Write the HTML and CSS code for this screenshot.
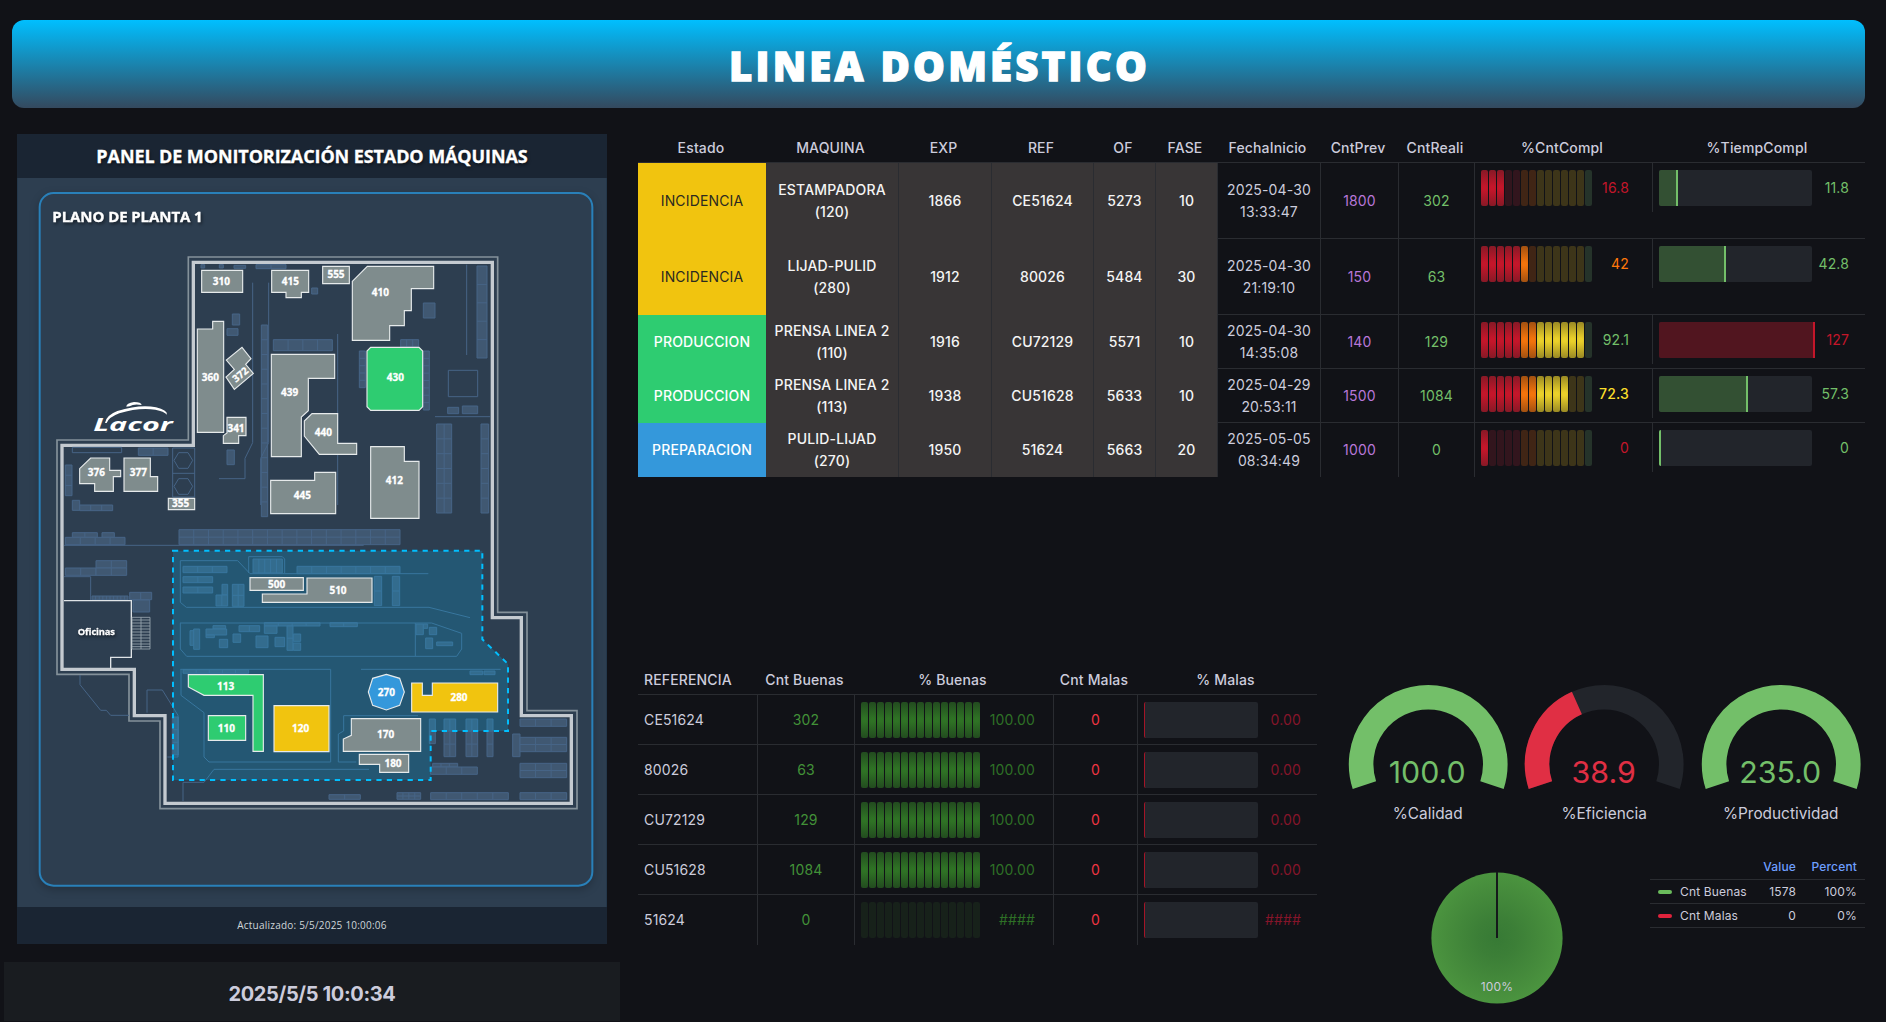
FILE: index.html
```html
<!DOCTYPE html>
<html lang="es">
<head>
<meta charset="utf-8">
<title>Linea Doméstico</title>
<link rel="stylesheet" href="styles.css">
</head>
<body>
<header class="banner"><h1>LINEA DOMÉSTICO</h1></header>
<main class="dashboard">
  <div class="left">
    <section class="plant">
      <h2 class="plant-title"><span>PANEL DE MONITORIZACIÓN ESTADO MÁQUINAS</span></h2>
      <svg class="plan" viewBox="-36 -186 1764 2187">
        <rect class="frame" x="29" y="-141" width="1658" height="2078" rx="42"/>
        <text class="plan-title" x="67" y="-54" textLength="451">PLANO DE PLANTA 1</text>
        <path class="wall-outer" d="M475 51H1403V1117H1491V1412H1641V1706H390V1443H297V1303H81V600H475Z"/>
        <path class="wall" d="M490 67H1387V1133H1474V1427H1624V1690H405V1427H313V1288H96V616H490Z"/>
        <g id="racks"></g>
        <g class="lines">
          <path d="M127 622H275V638H127ZM428 624H494V771H428ZM428 700H494M432 661L446 638H474L488 661L474 685H446ZM432 739L446 716H474L488 739L474 763H446Z"/>
          <path d="M668 128V608L645 655V716H567M716 128V608L692 655V795M923 282V795M1310 74V345M1215 530H1380M1255 391H1343V470H1255Z"/>
          <g transform="translate(0 840)">
            <path d="M102 76H1001M102 170H182V240M150 465V494L212 571H229L242 586H297M351 578V510H397L444 586V711H412"/>
            <path d="M1195 161H660L623 122H451V247L469 262H1197L1320 293M656 159V110H757L764 117V159"/>
            <path d="M451 308V387L470 409H1280L1295 387V340L1205 309H451M1156 309V408"/>
            <path d="M451 448H902V726H537L522 711V578L453 526V448M993 448H1412M1164 587H941V633L925 642V726H979M459 843V787H522L552 748H1017"/>
          </g>
        </g>
        <path class="zone" d="M429 932H1357V1198L1434 1272V1473H1202V1620H429Z"/>
        <g class="office" transform="translate(0 840)">
          <path d="M102 242H304V412H242V445"/>
          <path class="stairs" d="M306 292H360V387H306ZM333 292V387M306 300H360M306 309H360M306 318H360M306 327H360M306 336H360M306 345H360M306 354H360M306 363H360M306 372H360M306 380H360"/>
        </g>
        <g class="machines">
          <path d="M515 91H638V157H515Z"/>
          <path d="M725 91H836V157H814V173H768V157H725Z"/>
          <path d="M502 267H548V244H581V577H502Z"/>
          <path d="M636 322L663 356L647 373L670 400L613 448L588 411L613 388L589 360Z"/>
          <path d="M591 532H648V587H626V610H580V587L591 579Z"/>
          <path d="M149 686L182 654H239V691H272V710H250V754H194V731H149Z"/>
          <path d="M282 654H361V710H383V754H282Z"/>
          <path d="M415 775H494V809H415Z"/>
          <path d="M724 343H914V415H835V512L814 531V650H724Z"/>
          <path d="M722 721H854V697H917V821H722Z"/>
          <path d="M823 543L846 521H923V610H980V643H868L823 588Z"/>
          <path d="M878 79H958V131H878Z"/>
          <path d="M967 124L1012 79H1211V146H1144V212H1123V257H1079V301H967Z"/>
          <path class="run" d="M1022 322H1167L1178 333V500L1167 511H1022L1011 500V333Z"/>
          <path d="M1022 620H1123V664H1167V835H1022Z"/>
          <path d="M660 1013H820V1051H660Z"/>
          <path d="M697 1062H831V1014H1026V1087H697Z"/>
          <path class="run" d="M475 1304H700V1534H669V1366H522L475 1341Z"/>
          <path class="run" d="M535 1427H647V1501H535Z"/>
          <path class="incident" d="M732 1397H897V1535H732Z"/>
          <path class="prep" d="M1069 1303L1109 1315L1123 1356L1109 1396L1069 1410L1028 1396L1015 1356L1028 1315Z"/>
          <path class="incident" d="M1145 1329H1177V1366H1207V1329H1403V1416H1145Z"/>
          <path d="M964 1436H1172V1534H940V1497L964 1486Z"/>
          <path d="M988 1543H1136V1597H1049V1573H988Z"/>
        </g>
        <g class="labels">
          <text x="574" y="135">310</text><text x="781" y="135">415</text><text x="541" y="423">360</text>
          <text transform="translate(638 412) rotate(-40)">372</text>
          <text x="618" y="576">341</text><text x="199" y="708">376</text><text x="325" y="708">377</text>
          <text x="452" y="801">355</text><text x="779" y="468">439</text><text x="817" y="777">445</text>
          <text x="880" y="588">440</text><text x="918" y="114">555</text><text x="1051" y="168">410</text>
          <text x="1096" y="423">430</text><text x="1093" y="732">412</text><text x="740" y="1044">500</text>
          <text x="924" y="1062">510</text><text x="587" y="1350">113</text><text x="589" y="1476">110</text>
          <text x="812" y="1476">120</text><text x="1069" y="1368">270</text><text x="1287" y="1383">280</text>
          <text x="1067" y="1494">170</text><text x="1089" y="1581">180</text>
          <text class="office-name" x="199" y="1185" textLength="111">Oficinas</text>
        </g>
        <g class="logo">
          <text x="190" y="574" textLength="238" lengthAdjust="spacingAndGlyphs">Lacor</text>
          <path d="M225 549Q228 526 262 513Q330 492 378 502Q412 510 411 524Q402 514 376 509Q325 502 268 520Q236 532 230 549Z"/>
          <path d="M289 500Q289 489 312 486Q334 486 335 495Q312 490 299 499Z"/>
        </g>
      </svg>
      <footer class="plant-foot">Actualizado: 5/5/2025 10:00:06</footer>
    </section>
    <div class="clock"><span>2025/5/5 10:0:34</span></div>
  </div>

  <div class="right">
    <div class="grid orders">
      <div class="head"><div>Estado</div><div>MAQUINA</div><div>EXP</div><div>REF</div><div>OF</div><div>FASE</div><div>FechaInicio</div><div>CntPrev</div><div>CntReali</div><div>%CntCompl</div><div>%TiempCompl</div></div>
      <div class="row tall"><div class="st yellow">INCIDENCIA</div><div class="g">ESTAMPADORA<br>(120)</div><div class="g">1866</div><div class="g">CE51624</div><div class="g">5273</div><div class="g">10</div><div>2025-04-30<br>13:33:47</div><div class="purple">1800</div><div class="green">302</div><div class="bar"><i class="lcd" data-lit="3"></i><b class="red">16.8</b></div><div class="bar"><i class="gauge"><i class="fill" style="width:19px"></i></i><b class="green">11.8</b></div></div>
      <div class="row tall"><div class="st yellow">INCIDENCIA</div><div class="g">LIJAD-PULID<br>(280)</div><div class="g">1912</div><div class="g">80026</div><div class="g">5484</div><div class="g">30</div><div>2025-04-30<br>21:19:10</div><div class="purple">150</div><div class="green">63</div><div class="bar"><i class="lcd" data-lit="6"></i><b class="orange">42</b></div><div class="bar"><i class="gauge"><i class="fill" style="width:67px"></i></i><b class="green">42.8</b></div></div>
      <div class="row"><div class="st prod">PRODUCCION</div><div class="g">PRENSA LINEA 2<br>(110)</div><div class="g">1916</div><div class="g">CU72129</div><div class="g">5571</div><div class="g">10</div><div>2025-04-30<br>14:35:08</div><div class="purple">140</div><div class="green">129</div><div class="bar"><i class="lcd" data-lit="13"></i><b class="green">92.1</b></div><div class="bar"><i class="gauge"><i class="fill over" style="width:156px"></i></i><b class="red">127</b></div></div>
      <div class="row"><div class="st prod">PRODUCCION</div><div class="g">PRENSA LINEA 2<br>(113)</div><div class="g">1938</div><div class="g">CU51628</div><div class="g">5633</div><div class="g">10</div><div>2025-04-29<br>20:53:11</div><div class="purple">1500</div><div class="green">1084</div><div class="bar"><i class="lcd" data-lit="11"></i><b class="gold">72.3</b></div><div class="bar"><i class="gauge"><i class="fill" style="width:89px"></i></i><b class="green">57.3</b></div></div>
      <div class="row last"><div class="st blue">PREPARACION</div><div class="g">PULID-LIJAD<br>(270)</div><div class="g">1950</div><div class="g">51624</div><div class="g">5663</div><div class="g">20</div><div>2025-05-05<br>08:34:49</div><div class="purple">1000</div><div class="green">0</div><div class="bar"><i class="lcd" data-lit="1"></i><b class="red">0</b></div><div class="bar"><i class="gauge"><i class="fill" style="width:2px"></i></i><b class="green">0</b></div></div>
    </div>

    <div class="bottom">
      <div class="grid refs">
        <div class="head"><div>REFERENCIA</div><div>Cnt Buenas</div><div>% Buenas</div><div>Cnt Malas</div><div>% Malas</div></div>
        <div class="row"><div>CE51624</div><div class="dgreen">302</div><div class="bar"><i class="lcd good" data-lit="15"></i><b class="ok">100.00</b></div><div class="bad">0</div><div class="bar"><i class="gauge none"></i><b class="wine">0.00</b></div></div>
        <div class="row"><div>80026</div><div class="dgreen">63</div><div class="bar"><i class="lcd good" data-lit="15"></i><b class="ok">100.00</b></div><div class="bad">0</div><div class="bar"><i class="gauge none"></i><b class="wine">0.00</b></div></div>
        <div class="row"><div>CU72129</div><div class="dgreen">129</div><div class="bar"><i class="lcd good" data-lit="15"></i><b class="ok">100.00</b></div><div class="bad">0</div><div class="bar"><i class="gauge none"></i><b class="wine">0.00</b></div></div>
        <div class="row"><div>CU51628</div><div class="dgreen">1084</div><div class="bar"><i class="lcd good" data-lit="15"></i><b class="ok">100.00</b></div><div class="bad">0</div><div class="bar"><i class="gauge none"></i><b class="wine">0.00</b></div></div>
        <div class="row last"><div>51624</div><div class="dgreen">0</div><div class="bar"><i class="lcd good" data-lit="0"></i><b class="ok">####</b></div><div class="bad">0</div><div class="bar"><i class="gauge none"></i><b class="wine">####</b></div></div>
      </div>

      <div class="kpis">
        <div class="dials">
          <svg class="dial" viewBox="-88.2 -88.4 176.4 150"><path class="arc ok-arc" d="M-63.8 20.7A67.1 67.1 0 1 1 63.8 20.7"/><text class="val ok-val" x="-1" y="18.6">100.0</text><text class="cap" x="-.5" y="54.6">%Calidad</text></svg>
          <svg class="dial" viewBox="-88.2 -88.4 176.4 150"><path class="arc rest" d="M-63.8 20.7A67.1 67.1 0 1 1 63.8 20.7"/><path class="arc low" d="M-63.8 20.7A67.1 67.1 0 0 1 -27.3 -61.3"/><text class="val low-val" x="-.5" y="18.6">38.9</text><text class="cap" y="54.6">%Eficiencia</text></svg>
          <svg class="dial" viewBox="-88.2 -88.4 176.4 150"><path class="arc ok-arc" d="M-63.8 20.7A67.1 67.1 0 1 1 63.8 20.7"/><text class="val ok-val" x="-1" y="18.6">235.0</text><text class="cap" x="-.5" y="54.6">%Productividad</text></svg>
        </div>
        <div class="share">
          <svg class="pie" viewBox="-66 -66 132 132">
            <defs><radialGradient id="pieFill"><stop offset="0" stop-color="#377a35"/><stop offset=".3" stop-color="#3c7f37"/><stop offset=".75" stop-color="#468c3c"/><stop offset="1" stop-color="#4b943f"/></radialGradient></defs>
            <circle r="65.6" fill="url(#pieFill)"/><path d="M0 0V-66" stroke="#15191b" stroke-width="2"/><text y="53">100%</text>
          </svg>
          <div class="legend">
            <div class="lrow lhead"><span></span><span>Value</span><span>Percent</span></div>
            <div class="lrow"><span><i class="key"></i>Cnt Buenas</span><span>1578</span><span>100%</span></div>
            <div class="lrow"><span><i class="key bad-key"></i>Cnt Malas</span><span>0</span><span>0%</span></div>
          </div>
        </div>
      </div>
    </div>
  </div>
</main>
<script src="app.js"></script>
</body>
</html>
```
FILE: styles.css
```css
* { box-sizing: border-box; }
body { margin: 0; height: 1022px; overflow: hidden; background: #111217; color: #ccccdc; font: 14px/22px Inter, "Liberation Sans", sans-serif; letter-spacing: .15px; }
i { font-style: normal; }
.banner { margin: 20px 21px 0 12px; height: 88px; border-radius: 12px; background: linear-gradient(#00bfff, #34495e); display: flex; justify-content: center; align-items: center; }
.banner h1 { margin: 0; padding: 4px 0 0 2px; color: #fff; font: 800 40px/48px "Open Sans", "Noto Sans", sans-serif; letter-spacing: 3.25px; -webkit-text-stroke: 1.3px #fff; }
.dashboard { display: flex; }
.left { width: 620px; flex: none; }
.plant { margin: 26px 0 0 17px; width: 590px; height: 810px; background: #2d3e50; border: 1px solid #24374a; display: flex; flex-direction: column; }
.plant-title { margin: -1px -1px 0; height: 44px; background: #1a2533; color: #fff; font: 700 18px/44px "Open Sans", sans-serif; letter-spacing: -.1px; -webkit-text-stroke: .3px #fff; text-align: center; text-shadow: 1px 2px 3px rgba(0,0,0,.5); }
.plan { display: block; width: 588px; height: 729px; font-family: "Open Sans", sans-serif; }
.plant-foot { margin: 0 -1px -1px; height: 37px; background: #1a2533; color: #cfd6da; font: 10px/37px "Open Sans", sans-serif; letter-spacing: .22px; text-align: center; }
.frame { fill: #2d3e50; stroke: #2980b9; stroke-width: 6; filter: drop-shadow(0 9px 12px rgba(0,0,0,.22)); }
.plan-title { fill: #fff; stroke: #fff; stroke-width: 1; font-size: 45px; font-weight: 700; letter-spacing: 0; filter: drop-shadow(4px 6px 5px rgba(0,0,0,.45)); }
.wall-outer { fill: none; stroke: #84919a; stroke-width: 5; }
.wall { fill: none; stroke: #c4cad0; stroke-width: 10; }
.rack { fill: #405872; stroke: #466486; stroke-width: 3; }
.lines { fill: none; stroke: #466486; stroke-width: 3; }
.zone { fill: rgba(0,191,255,.2); stroke: #00bfff; stroke-width: 6; stroke-dasharray: 15.6 15.6; }
.office { fill: none; stroke: #dfe3e6; stroke-width: 4; }
.stairs { stroke: #9aa7b1; stroke-width: 2.5; }
.machines { fill: #7f8c8d; stroke: #e6eaeb; stroke-width: 3.4; }
.machines .run { fill: #2ecc71; }
.machines .incident { fill: #f1c40f; }
.machines .prep { fill: #3498db; }
.labels { fill: #fff; stroke: #fff; stroke-width: .8; font-size: 30px; font-weight: 700; text-anchor: middle; letter-spacing: 0; }
.office-name { font-size: 28px; filter: drop-shadow(3px 5px 4px rgba(0,0,0,.5)); }
.logo { fill: #fff; font: italic 700 54px "Open Sans", sans-serif; letter-spacing: 0; }
.clock { margin: 18px 0 0 4px; width: 616px; height: 59px; background: #191c20; font: 700 20px/64px Inter, sans-serif; letter-spacing: -.35px; text-align: center; }
.right { margin-left: 18px; padding-top: 26px; width: 1248px; flex: none; }
.head, .row { display: grid; }
.orders { width: 1227px; }
.orders > div { grid-template-columns: 128px 133px 93px 102px 62px 62px 103px 78px 76px 178px 212px; }
.refs { width: 679px; flex: none; }
.refs > div { grid-template-columns: 120px 97px 199px 84px 179px; }
.head { height: 29px; border-bottom: 1px solid #2a2c31; font-weight: 500; text-align: center; line-height: 28px; }
.head div { padding-right: 4px; }
.head div:first-child { padding-right: 2px; }
.row { height: 54px; text-align: center; background: linear-gradient(#2a2c31, #2a2c31) bottom / 100% 1px no-repeat; }
.row.last { background: none; }
.tall { height: 76px; }
.row > div { border-right: 1px solid #2a2c31; display: flex; align-items: center; justify-content: center; }
.row > div:last-child { border-right: 0; }
.row > .st { border: 0; color: #fff; font-weight: 500; }
.row > .yellow { background: #f1c40f; color: #2b2a20; font-weight: 400; }
.prod { background: #2ecc71; }
.blue { background: #3498db; }
.row > .g { background: #383536; color: #f4f4f4; font-weight: 500; }
.purple { color: #b877d9; }
.green { color: #73bf69; }
.row > .bar { height: 49px; padding: 0 23px 0 6px; justify-content: space-between; align-self: start; }
.orders .row > .bar:last-child { padding: 0 16px 0 6px; }
.bar b { font-weight: 400; line-height: 36px; }
.red { color: #c4162a; }
.orange { color: #ff780a; }
.bar .gold { color: #fade2a; font-weight: 500; }
.lcd { display: flex; gap: 1px; height: 36px; }
.cell { width: 7px; border-radius: 2px; }
.c-red { background: #32151d; }
.c-orange { background: #402515; }
.c-yellow { background: #3d3519; }
.c-green { background: #25332a; }
.c-good { background: #17211a; }
.on.c-red { background: radial-gradient(circle, #c4162a 10%, #861926); }
.on.c-orange { background: radial-gradient(circle, #f2730c 10%, #a05011); }
.on.c-yellow { background: radial-gradient(circle, #ead02a 10%, #988824); }
.on.c-good { background: radial-gradient(circle, #2f7225 10%, #224a1f); }
.gauge { width: 153px; height: 36px; border-radius: 2px; background: #22252b; flex: none; display: block; }
.fill { display: block; height: 36px; background: #335033; border-right: 2px solid #73bf69; border-radius: 2px 0 0 2px; }
.fill.over { background: #51151f; border-color: #c4162a; }
.bottom { display: flex; margin-top: 189px; }
.refs .row { height: 50px; }
.refs .row > div:first-child, .refs .head > div:first-child { justify-content: flex-start; text-align: left; padding-left: 6px; }
.refs .row > .bar { height: 50px; padding-right: 18px; }
.refs .row > .bar:last-child { padding-right: 16px; }
.refs .gauge { width: 114px; border-left: 1px solid #a31527; }
.dgreen { color: #429138; }
.ok { color: #2e7026; }
.bad { color: #f03442; }
.wine { color: #85152a; }
.kpis { margin-left: 23px; width: 532px; }
.dials { display: flex; margin-top: 10px; }
.dial { width: 176.4px; height: 150px; flex: none; display: block; text-anchor: middle; letter-spacing: 0; }
.arc { fill: none; stroke-width: 24.6; }
.ok-arc { stroke: #73bf69; }
.rest { stroke: #22252b; }
.low { stroke: #e02f44; }
.val { font-size: 30.4px; }
.ok-val { fill: #73bf69; }
.low-val { fill: #e02f44; }
.cap { font-size: 15.4px; fill: #ccccdc; }
.share { display: flex; }
.pie { margin: 46px 0 0 91px; width: 132px; height: 132px; flex: none; }
.pie text { fill: #ccccdc; font-size: 12px; text-anchor: middle; }
.legend { margin: 29px 0 0 87px; width: 215px; font-size: 12px; }
.lrow { display: grid; grid-template-columns: 1fr 38px 61px; height: 24px; line-height: 23px; border-bottom: 1px solid #2a2c31; text-align: right; padding-right: 8px; }
.lhead { height: 25px; color: #6e9fff; font-weight: 500; line-height: 24px; }
.lrow span:first-child { display: flex; align-items: center; gap: 8px; padding-left: 8px; white-space: nowrap; }
.key { width: 14px; height: 4px; border-radius: 2px; background: #6abb5c; }
.bad-key { background: #e0233c; }
```
FILE: app.js
```js
// Storage racks: [x, y, width, height, columns, rows]
const racks = [
  [513,74,11,10],[568,74,12,10],[612,76,35,9],[678,74,90,12,2],[845,144,18,18],[607,222,22,33],[591,266,33,20],
  [694,255,19,575,1,13],[730,299,177,33,4],[591,630,22,44],[325,624,89,22,2],[106,675,20,92,1,3],[127,781,22,30],[149,795,99,17,3],
  [1180,189,35,45],[1112,299,54,22,3],[988,333,18,110,1,5],[1180,333,18,177,1,8],[1341,78,30,276,1,5],[1253,502,33,19],
  [1297,498,46,23],[1220,552,45,267,2,6],[1353,552,23,267,1,6],
  [127,878,75,14,2],[216,878,37,14],[106,892,179,22,4],[447,869,663,45,15,2],[198,962,92,22,2],[106,984,92,22,2],[198,984,92,22,2],
  [186,1068,108,12,10],[299,1057,66,22,2],[309,1080,50,36],[459,979,132,19,3],[459,1010,89,18,2],[459,1041,89,18,2],
  [576,1033,17,32],[558,1065,35,33,2],[607,1033,35,66,2,2],[669,957,88,42,5],[801,979,309,22,7],[1033,1009,22,88,1,2],[1087,1009,22,88,1,2],
  [480,1172,12,44],[491,1167,18,61],[549,1157,38,10],[528,1167,62,18],[528,1185,25,8],[568,1198,25,25],[609,1182,23,25],
  [627,1157,62,18,2],[678,1188,36,35],[703,1148,167,10,4],[703,1158,38,22],[735,1192,29,28],[771,1158,18,73,1,2],[790,1182,22,22],
  [790,1209,22,22],[900,1148,82,12,2],[1158,1152,22,32],[1180,1152,13,13],[1198,1162,22,22],[1187,1194,21,32],[1220,1206,48,11],
  [459,1289,197,11,5],[1320,1293,38,11],[1362,1293,33,11],[1198,1437,18,74,1,2],[1242,1437,35,113,2,3],[1308,1437,35,113,2,3],
  [1371,1437,18,113,1,3],[1470,1437,140,22,3],[1448,1482,22,68],[1470,1492,140,43,3,2],[1208,1570,75,11,3],[1202,1581,140,22,3],
  [1470,1570,140,43,3,2],[1202,1658,233,21,5],[1470,1658,140,21,3],[897,1664,94,14,2],[1101,1658,71,20,4,2],[427,1431,18,114,1,3]
];
const ns = 'http://www.w3.org/2000/svg';
const layer = document.getElementById('racks');
for (const [x, y, w, h, cols = 1, rows = 1] of racks) {
  let d = `M${x} ${y}h${w}v${h}h${-w}z`;
  for (let i = 1; i < cols; i++) d += `M${x + w * i / cols} ${y}v${h}`;
  for (let i = 1; i < rows; i++) d += `M${x} ${y + h * i / rows}h${w}`;
  const p = document.createElementNS(ns, 'path');
  p.setAttribute('class', 'rack');
  p.setAttribute('d', d);
  layer.appendChild(p);
}

// Segmented bars: colour of each segment follows its threshold
const scale = i => i < 5 ? 'c-red' : i < 7 ? 'c-orange' : i < 13 ? 'c-yellow' : 'c-green';
document.querySelectorAll('.lcd').forEach(bar => {
  const good = bar.classList.contains('good');
  for (let i = 0; i < (good ? 15 : 14); i++) {
    const c = document.createElement('i');
    c.className = 'cell ' + (good ? 'c-good' : scale(i)) + (i < +bar.dataset.lit ? ' on' : '');
    bar.appendChild(c);
  }
});
```
